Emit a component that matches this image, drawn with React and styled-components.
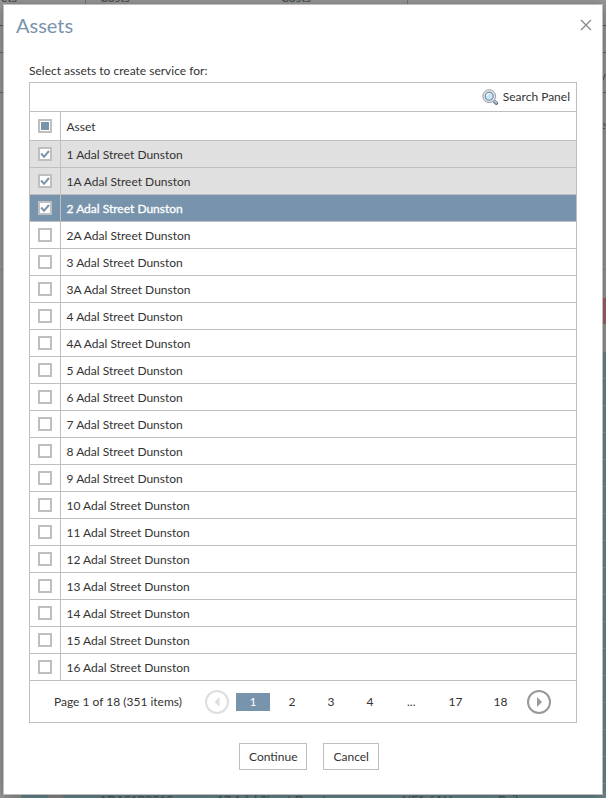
import React, { useEffect, useRef, useState } from "react";
import styled, { createGlobalStyle } from "styled-components";

const GlobalStyle = createGlobalStyle`
  *, *::before, *::after { box-sizing: border-box; }
  body {
    margin: 0;
    color: #333;
    background: #999;
    font: 12px/16px Lato, "Open Sans", sans-serif;
  }
  button, input { font: inherit; color: inherit; }
`;

const Screen = styled.div`
  position: relative;
  min-height: 100vh;
  display: flex;
  overflow: hidden;
`;

const PageBehind = styled.div`
  position: absolute;
  inset: 0;
  overflow: hidden;
  color: #4c5558;
  background: #999;
`;

const BehindHeader = styled.div`
  display: grid;
  grid-template-columns: 86px 180px 142px 1fr;
  height: 26px;
  border-bottom: 1px solid #555;
  font-weight: 700;
`;

const BehindHeaderCell = styled.div`
  margin-top: -10px;
  padding-left: ${(p) => p.$pad}px;
  border-right: 1px solid ${(p) => (p.$divided ? "#777" : "transparent")};
`;

const BehindBlock = styled.div`
  height: ${(p) => p.$height}px;
  margin-left: ${(p) => (p.$color ? 21 : 0)}px;
  padding-top: ${(p) => p.$top || 0}px;
  text-align: right;
  background: ${(p) => p.$color || "transparent"};
  border-bottom: 1px solid ${(p) => p.$line || "transparent"};
`;

const BehindRow = styled.div`
  display: grid;
  grid-template-columns: 27px 15px 28px 118px 185px 96px 1fr;
  height: 27px;
  margin-left: 21px;
  padding-top: 8px;
  background: #6b8a90;
  border-bottom: 1px solid #8a9899;
`;

const BehindCell = styled.div`
  padding-left: 7px;
  white-space: nowrap;
  border-left: 1px solid ${(p) => (p.$plain ? "transparent" : "#7e8e91")};
`;

const BehindGap = styled.div`
  margin-top: -8px;
  background: #8c8c8c;
`;

const Dialog = styled.section`
  position: relative;
  flex: 1;
  display: flex;
  flex-direction: column;
  margin: 4px 3px 3px;
  background: #fff;
  border: 1px solid #bfbfbf;
  box-shadow: 0 2px 12px rgba(0, 0, 0, 0.35);
`;

const DialogHeader = styled.header`
  display: flex;
  align-items: center;
  justify-content: space-between;
  height: 40px;
  padding: 0 10px 0 12px;
`;

const Title = styled.h1`
  margin: 0;
  font-size: 20px;
  line-height: 28px;
  font-weight: 400;
  color: #7994ad;
`;

const CloseButton = styled.button`
  display: grid;
  padding: 0;
  border: 0;
  background: none;
  cursor: pointer;
`;

const DialogBody = styled.div`
  padding: 18px 25px 24px;
`;

const Prompt = styled.p`
  margin: 0 0 3px;
`;

const GridPanel = styled.div`
  border: 1px solid #bfbfbf;
`;

const Toolbar = styled.div`
  display: flex;
  justify-content: flex-end;
  height: 28px;
  padding: 0 6px;
`;

const ToolbarButton = styled.button`
  display: flex;
  align-items: center;
  gap: 4px;
  padding: 0;
  border: 0;
  background: none;
  cursor: pointer;
`;

const Table = styled.table`
  width: 100%;
  border-collapse: collapse;
`;

const Row = styled.tr`
  height: ${(p) => (p.$header ? 29 : 27)}px;
  color: ${(p) => (p.$focused ? "#fff" : "#333")};
  -webkit-text-stroke: ${(p) => (p.$focused ? "0.3px #fff" : "0")};
  background: ${(p) => (p.$focused ? "#7893ac" : p.$selected ? "#e0e0e0" : "#fff")};
`;

const cell = `
  padding: 1px 0 0;
  border: 1px solid #bfbfbf;
  text-align: left;
  font-weight: 400;
  &:first-child { width: 30px; padding: 0; border-left: 0; }
  &:last-child { border-right: 0; padding-left: 6px; }
`;
const HeaderCell = styled.th`${cell}`;
const Cell = styled.td`${cell}`;

const CheckFrame = styled.label`
  display: grid;
  width: 14px;
  height: 14px;
  margin-left: 8px;
  > * { grid-area: 1 / 1; }
`;

const CheckInput = styled.input`
  appearance: none;
  width: 14px;
  height: 14px;
  margin: 0;
  background: #fff;
  border: 2px solid #bfbfbf;
  cursor: pointer;
  &:indeterminate {
    background: #7893ac;
    box-shadow: inset 0 0 0 1px #fff;
  }
`;

const Tick = styled.svg`
  width: 14px;
  height: 14px;
  pointer-events: none;
`;

const Pager = styled.nav`
  display: flex;
  align-items: center;
  height: 41px;
  padding-left: 24px;
`;

const PagerSummary = styled.span`
  width: 151px;
  white-space: nowrap;
`;

const ArrowButton = styled.button`
  display: grid;
  padding: 0;
  border: 0;
  background: none;
  color: ${(p) => (p.disabled ? "#dedede" : "#999")};
  cursor: pointer;
`;

const PageList = styled.div`
  display: flex;
  align-items: center;
  gap: 5px;
  padding: 0 7px;
`;

const PageLink = styled.a`
  min-width: 34px;
  padding: 1px 13px;
  text-align: center;
  text-decoration: none;
  color: ${(p) => (p.$current ? "#fff" : "#333")};
  background: ${(p) => (p.$current ? "#7893ac" : "transparent")};
`;

const Ellipsis = styled.span`
  padding: 0 15px;
`;

const Actions = styled.footer`
  display: flex;
  justify-content: center;
  gap: 16px;
  padding: 20px 0 0 12px;
`;

const ActionButton = styled.button`
  height: 27px;
  padding: 0 9px;
  border: 1px solid #bfbfbf;
  background: #fff;
  cursor: pointer;
`;

const ASSETS = [
  "1", "1A", "2", "2A", "3", "3A", "4", "4A", "5", "6",
  "7", "8", "9", "10", "11", "12", "13", "14", "15", "16",
].map((number) => `${number} Adal Street Dunston`);

const FOCUSED = 2;

function Checkbox({ label, checked, partial, onChange }) {
  const ref = useRef(null);
  useEffect(() => {
    ref.current.indeterminate = Boolean(partial);
  }, [partial]);
  return (
    <CheckFrame>
      <CheckInput ref={ref} type="checkbox" aria-label={label} checked={checked} onChange={onChange} />
      {checked && (
        <Tick viewBox="0 0 14 14" aria-hidden="true">
          <path d="M3.2 6.5 6 9.8 11 4" fill="none" stroke="#7893ac" strokeWidth="2" />
        </Tick>
      )}
    </CheckFrame>
  );
}

function SearchIcon() {
  return (
    <svg width="17" height="17" viewBox="0 0 17 17" aria-hidden="true">
      <path d="M11.4 11.4 14.4 14.2" stroke="#596575" strokeWidth="3.4" strokeLinecap="round" />
      <path d="M11.2 11 14.2 13.8" stroke="#b6c3d4" strokeWidth="2" strokeLinecap="round" />
      <circle cx="7.2" cy="7.2" r="6.4" fill="#e3e6ea" stroke="#9a9ea5" />
      <circle cx="7.2" cy="7.2" r="4" fill="#c2e5f7" stroke="#75869a" strokeWidth="1.1" />
      <path d="M4.8 7a2.5 2.5 0 0 1 2.6-2.4" stroke="#fff" strokeWidth="1.2" fill="none" />
    </svg>
  );
}

function ArrowIcon({ direction }) {
  return (
    <svg width="24" height="24" viewBox="0 0 24 24" aria-hidden="true">
      <circle cx="12" cy="12" r="11" fill="none" stroke="currentColor" strokeWidth="2" />
      <path d={direction === "left" ? "M14.5 7v10L9.5 12Z" : "M10 7v10L15 12Z"} fill="currentColor" />
    </svg>
  );
}

function Background() {
  return (
    <PageBehind aria-hidden="true">
      <BehindHeader>
        <BehindHeaderCell $pad={1} $divided>ets</BehindHeaderCell>
        <BehindHeaderCell $pad={14}>Costs</BehindHeaderCell>
        <BehindHeaderCell $pad={15} $divided>Costs</BehindHeaderCell>
        <BehindHeaderCell $pad={0} />
      </BehindHeader>
      <BehindBlock $height={27} $line="#666" />
      <BehindBlock $height={40} $line="#666" $top={15}>v</BehindBlock>
      <BehindBlock $height={177} $line="#8a8a8a" $top={24}>e</BehindBlock>
      <BehindBlock $height={28} />
      <BehindBlock $height={26} $color="#a66266" />
      <BehindBlock $height={28} />
      {Array.from({ length: 16 }, (_, i) => (
        <BehindRow key={i} />
      ))}
      <BehindRow>
        <BehindCell $plain />
        <BehindGap />
        <BehindCell $plain />
        <BehindCell $plain>ADAS1B0012</BehindCell>
        <BehindCell>17 Adal Street Dunston</BehindCell>
        <BehindCell>NE1 6AH</BehindCell>
        <BehindCell>Boiler</BehindCell>
      </BehindRow>
    </PageBehind>
  );
}

export default function App() {
  const [selected, setSelected] = useState(() => new Set([0, 1, 2]));
  const all = selected.size === ASSETS.length;

  const toggle = (index) =>
    setSelected((previous) => {
      const next = new Set(previous);
      if (!next.delete(index)) next.add(index);
      return next;
    });

  return (
    <>
      <GlobalStyle />
      <Screen>
        <Background />
        <Dialog role="dialog" aria-labelledby="dialog-title">
          <DialogHeader>
            <Title id="dialog-title">Assets</Title>
            <CloseButton type="button" aria-label="Close">
              <svg width="12" height="12" viewBox="0 0 12 12" aria-hidden="true">
                <path d="M1 1 11 11M11 1 1 11" stroke="#8c8c8c" strokeWidth="1.4" />
              </svg>
            </CloseButton>
          </DialogHeader>
          <DialogBody>
            <Prompt>Select assets to create service for:</Prompt>
            <GridPanel>
              <Toolbar>
                <ToolbarButton type="button">
                  <SearchIcon />
                  Search Panel
                </ToolbarButton>
              </Toolbar>
              <Table>
                <thead>
                  <Row $header>
                    <HeaderCell>
                      <Checkbox
                        label="Select all"
                        checked={all}
                        partial={selected.size > 0 && !all}
                        onChange={() => setSelected(new Set(all ? [] : ASSETS.keys()))}
                      />
                    </HeaderCell>
                    <HeaderCell>Asset</HeaderCell>
                  </Row>
                </thead>
                <tbody>
                  {ASSETS.map((asset, index) => (
                    <Row key={asset} $selected={selected.has(index)} $focused={index === FOCUSED}>
                      <Cell>
                        <Checkbox label={asset} checked={selected.has(index)} onChange={() => toggle(index)} />
                      </Cell>
                      <Cell>{asset}</Cell>
                    </Row>
                  ))}
                </tbody>
              </Table>
              <Pager aria-label="Pages">
                <PagerSummary>Page 1 of 18 (351 items)</PagerSummary>
                <ArrowButton type="button" aria-label="Previous page" disabled>
                  <ArrowIcon direction="left" />
                </ArrowButton>
                <PageList>
                  <PageLink href="#1" $current aria-current="page">1</PageLink>
                  <PageLink href="#2">2</PageLink>
                  <PageLink href="#3">3</PageLink>
                  <PageLink href="#4">4</PageLink>
                  <Ellipsis>...</Ellipsis>
                  <PageLink href="#17">17</PageLink>
                  <PageLink href="#18">18</PageLink>
                </PageList>
                <ArrowButton type="button" aria-label="Next page">
                  <ArrowIcon direction="right" />
                </ArrowButton>
              </Pager>
            </GridPanel>
            <Actions>
              <ActionButton type="button">Continue</ActionButton>
              <ActionButton type="button">Cancel</ActionButton>
            </Actions>
          </DialogBody>
        </Dialog>
      </Screen>
    </>
  );
}
